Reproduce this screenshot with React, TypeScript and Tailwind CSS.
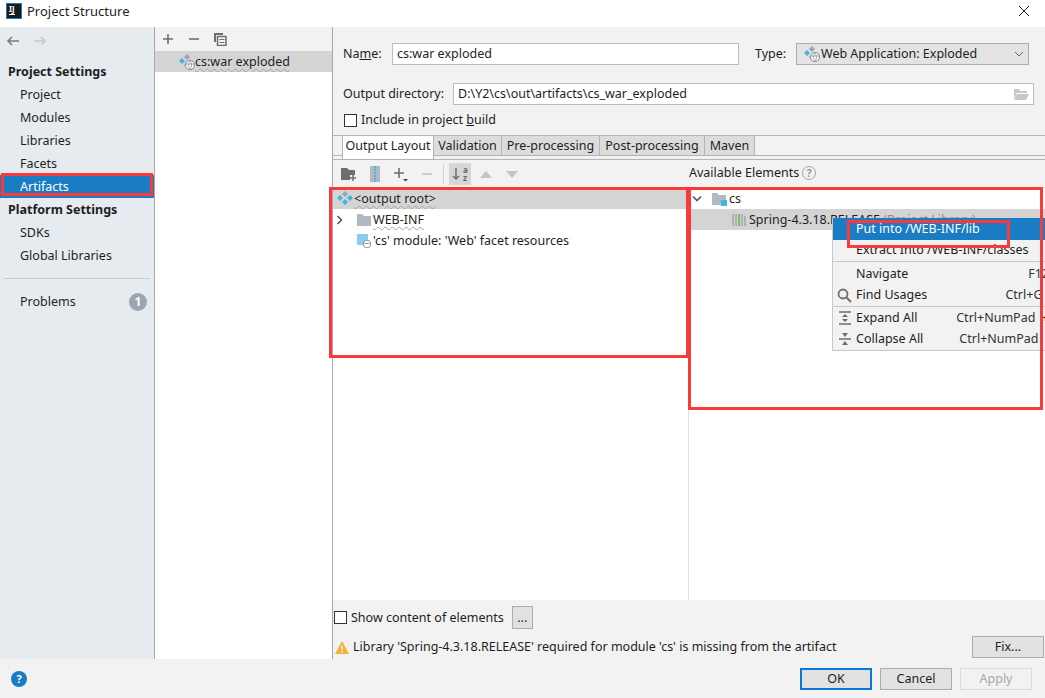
import React from 'react';

const ArtifactIcon = ({ globe = true }: { globe?: boolean }) => (
    <svg width="18" height="16" viewBox="0 0 18 16" className="shrink-0">
        <path d="M2 7l3-3 3 3-3 3z" fill="#40b6e0" />
        <path d="M7 3l3-3 3 3-3 3z" fill="#9aa7b0" />
        <path d="M7 11l3-3 3 3-3 3z" fill={globe ? '#9aa7b0' : '#40b6e0'} />
        {!globe && <path d="M12 7l3-3 3 3-3 3z" fill="#40b6e0" />}
        {globe && <circle cx="13" cy="11" r="4.5" fill="#fff" stroke="#8a969e" strokeWidth="1.2" />}
        {globe && <path d="M9 10h8M13 7c-2 2-2 6 0 8M13 7c2 2 2 6 0 8" stroke="#8a969e" strokeWidth="0.8" fill="none" />}
    </svg>
);

const Folder = ({ badge }: { badge?: boolean }) => (
    <svg width="16" height="14" viewBox="0 0 16 14" className="shrink-0">
        <path d="M1 1h5l2 2h7v10H1z" fill="#b0bac2" />
        {badge && <rect x="10" y="8" width="6" height="6" fill="#40b6e0" />}
    </svg>
);

const Wavy = ({ children }: { children: React.ReactNode }) => (
    <span className="underline decoration-wavy decoration-[#a3a3a3] decoration-1 underline-offset-2">{children}</span>
);

const NavItem = ({ label, active }: { label: string; active?: boolean }) => (
    <div className={`h-[23px] pl-5 flex items-center ${active ? 'bg-[#1a7cc3] text-white' : ''}`}>{label}</div>
);

const ToolIcon = ({ children, active }: { children: React.ReactNode; active?: boolean }) => (
    <div className={`w-[22px] h-[22px] flex items-center justify-center ${active ? 'bg-[#d6d6d6]' : ''}`}>{children}</div>
);

const Tab = ({ label, w, active }: { label: string; w: string; active?: boolean }) => (
    <div className={`${w} flex items-center justify-center border-r border-[#b4b4b4] ${active ? 'bg-white h-[23px] pb-[3px] border-l relative' : 'bg-[#dcdcdc] h-[19px]'}`}>{label}</div>
);

const Button = ({ label, w, primary, disabled }: { label: string; w: string; primary?: boolean; disabled?: boolean }) => (
    <div className={`${w} h-[22px] flex items-center justify-center bg-[#e1e1e1] border ${primary ? 'border-2 border-[#0a78d7]' : 'border-[#adadad]'} ${disabled ? 'bg-[#f2f2f2] border-[#d9d9d9] text-[#a8a8a8]' : ''}`}>{label}</div>
);

const Check = () => <div className="w-[13px] h-[13px] border border-[#333] bg-white shrink-0" />;

const MenuRow = ({ label, shortcut, icon, active }: { label: string; shortcut?: string; icon?: React.ReactNode; active?: boolean }) => (
    <div className={`h-[21.5px] pr-[15px] flex items-center justify-between whitespace-nowrap ${active ? 'bg-[#1a7cc3] text-white' : ''}`}>
        <div className="flex items-center">
            <div className="w-[23px] flex justify-center">{icon}</div>
            <span>{label}</span>
        </div>
        {shortcut && <span className="text-[#333] whitespace-pre">{shortcut}</span>}
    </div>
);

export default function App() {
    return (
        <div className="relative w-[1045px] h-[698px] overflow-hidden bg-[#f2f2f2] text-[12.5px] leading-[14px] text-[#1e1e1e] font-['Noto_Sans','Liberation_Sans',sans-serif]">
            {/* Title bar */}
            <div className="h-[27px] bg-white flex items-center pl-[6px] pr-[15px] pb-[5px]">
                <div className="w-[16px] h-[16px] bg-[#1a1a1a] border border-[#1a7cc3] text-white text-[8px] font-bold leading-[7px] pl-[2px] pt-[1px]">
                    IJ
                    <div className="w-[6px] h-px bg-white mt-[2px]" />
                </div>
                <span className="ml-[5px] text-[13px]">Project Structure</span>
                <svg width="12" height="12" viewBox="0 0 12 12" className="ml-auto">
                    <path d="M1 1l10 10M11 1L1 11" stroke="#222" strokeWidth="1" />
                </svg>
            </div>

            <div className="flex h-[632px]">
                {/* Sidebar */}
                <div className="w-[155px] shrink-0 bg-[#e6ebf0] border-r border-[#a8a8a8] flex flex-col">
                    <div className="h-[28px] flex items-center gap-[13px] pl-[6px]">
                        <svg width="14" height="12" viewBox="0 0 14 12"><path d="M13 6H2M6 2L2 6l4 4" stroke="#7a7a7a" strokeWidth="1.6" fill="none" /></svg>
                        <svg width="14" height="12" viewBox="0 0 14 12"><path d="M1 6h11M8 2l4 4-4 4" stroke="#c4c8cb" strokeWidth="1.6" fill="none" /></svg>
                    </div>
                    <div className="h-[22px] mt-[6px] pl-2 flex items-center font-bold">Project Settings</div>
                    <NavItem label="Project" />
                    <NavItem label="Modules" />
                    <NavItem label="Libraries" />
                    <NavItem label="Facets" />
                    <NavItem label="Artifacts" active />
                    <div className="h-[23px] pl-2 flex items-center font-bold">Platform Settings</div>
                    <NavItem label="SDKs" />
                    <NavItem label="Global Libraries" />
                    <div className="h-px bg-[#c9cccf] mx-1 mt-[11px] mb-[11px]" />
                    <div className="h-[23px] pl-5 pr-[7px] flex items-center justify-between">
                        <span>Problems</span>
                        <span className="w-[18px] h-[18px] rounded-full bg-[#9aa7b0] text-white font-bold text-[12px] flex items-center justify-center">1</span>
                    </div>
                </div>

                {/* Artifact list */}
                <div className="w-[178px] shrink-0 bg-white border-r border-[#a8a8a8]">
                    <div className="h-[24px] bg-[#f2f2f2] flex items-center pl-[2px] gap-[4px]">
                        <ToolIcon><svg width="12" height="12" viewBox="0 0 12 12"><path d="M6 1v10M1 6h10" stroke="#6e6e6e" strokeWidth="1.6" /></svg></ToolIcon>
                        <ToolIcon><svg width="12" height="12" viewBox="0 0 12 12"><path d="M1 6h10" stroke="#6e6e6e" strokeWidth="1.6" /></svg></ToolIcon>
                        <ToolIcon><svg width="14" height="14" viewBox="0 0 14 14"><path d="M1 1h9v2H3v7H1z" fill="#6e6e6e" /><path d="M4.5 4.5h8.5v9H4.5z" fill="none" stroke="#6e6e6e" strokeWidth="1.5" /><path d="M6.5 7.5h5M6.5 10.5h5" stroke="#6e6e6e" strokeWidth="1" /></svg></ToolIcon>
                    </div>
                    <div className="h-[21px] bg-[#d4d4d4] flex items-center pl-[22px]">
                        <ArtifactIcon />
                        <Wavy>cs:war exploded</Wavy>
                    </div>
                </div>

                {/* Detail panel */}
                <div className="flex-1 min-w-0 flex flex-col">
                    <div className="h-[16px]" />
                    <div className="h-[22px] flex items-center pl-[10px]">
                        <span className="w-[49px]">Na<span className="underline">m</span>e:</span>
                        <div className="w-[347px] h-[22px] bg-white border border-[#bdbdbd] flex items-center pl-[4px]">cs:war exploded</div>
                        <span className="ml-[16px] w-[41px]">Type:</span>
                        <div className="w-[233px] h-[22px] bg-[#e3e3e3] border border-[#adadad] flex items-center pl-[5px] gap-[1px]">
                            <ArtifactIcon />
                            <span>Web Application: Exploded</span>
                            <svg width="10" height="6" viewBox="0 0 10 6" className="ml-auto mr-[4px]"><path d="M1 1l4 4 4-4" stroke="#666" fill="none" /></svg>
                        </div>
                    </div>
                    <div className="h-[22px] mt-[18px] flex items-center pl-[10px]">
                        <span className="w-[110px]">Output directory:</span>
                        <div className="w-[581px] h-[22px] bg-white border border-[#bdbdbd] flex items-center pl-[4px] justify-between pr-[4px]">
                            <span>D:\Y2\cs\out\artifacts\cs_war_exploded</span>
                            <svg width="16" height="12" viewBox="0 0 16 12"><path d="M1 1h5l1 2h7v2H4L1 11z" fill="#c4c9cc" /><path d="M4 6h12l-3 6H1z" fill="#c4c9cc" /></svg>
                        </div>
                    </div>
                    <div className="h-[14px] mt-[8px] flex items-center pl-[11px] gap-[4px]">
                        <Check />
                        <span>Include in project <span className="underline">b</span>uild</span>
                    </div>

                    {/* Tabs */}
                    <div className="mt-[8px] border-t border-[#b4b4b4]">
                        <div className="h-[20px] pl-[9px] flex items-start border-b border-[#b4b4b4]">
                            <Tab label="Output Layout" w="w-[92px]" active />
                            <Tab label="Validation" w="w-[68px]" />
                            <Tab label="Pre-processing" w="w-[98px]" />
                            <Tab label="Post-processing" w="w-[105px]" />
                            <Tab label="Maven" w="w-[50px]" />
                        </div>
                    </div>
                    <div className="h-[3px]" />
                    <div className="h-px bg-[#b4b4b4]" />

                    {/* Layout + available elements */}
                    <div className="flex h-[28px]">
                        <div className="w-[356px] flex items-center pl-[5px] gap-[4px]">
                            <ToolIcon><svg width="16" height="14" viewBox="0 0 16 14"><path d="M0 1h6l2 2h6v5H9v5H0z" fill="#6e6e6e" /><path d="M12 8v6M9 11h6" stroke="#6e6e6e" strokeWidth="1.5" /></svg></ToolIcon>
                            <ToolIcon><svg width="12" height="16" viewBox="0 0 12 16"><rect x="1" y="0" width="10" height="16" fill="#b0bac2" /><path d="M6 0v16" stroke="#40b6e0" strokeWidth="2" strokeDasharray="2 1" /></svg></ToolIcon>
                            <ToolIcon><svg width="16" height="16" viewBox="0 0 16 16"><path d="M6 2v10M1 7h10" stroke="#6e6e6e" strokeWidth="1.6" /><path d="M10 13h5l-2.5 2.5z" fill="#444" /></svg></ToolIcon>
                            <ToolIcon><svg width="12" height="12" viewBox="0 0 12 12"><path d="M1 6h10" stroke="#c4c4c4" strokeWidth="1.6" /></svg></ToolIcon>
                            <div className="w-px h-[20px] bg-[#d0d0d0] mx-[1px]" />
                            <ToolIcon active>
                                <svg width="12" height="16" viewBox="0 0 12 16"><path d="M5 2v11M2 10l3 3 3-3" stroke="#6e6e6e" strokeWidth="1.5" fill="none" /></svg>
                                <span className="text-[8px] leading-[8px] font-bold text-[#666] w-[6px]">a z</span>
                            </ToolIcon>
                            <ToolIcon><svg width="12" height="7" viewBox="0 0 12 7"><path d="M6 0l6 7H0z" fill="#c4c4c4" /></svg></ToolIcon>
                            <ToolIcon><svg width="12" height="7" viewBox="0 0 12 7"><path d="M0 0h12L6 7z" fill="#c4c4c4" /></svg></ToolIcon>
                        </div>
                        <div className="flex-1 flex items-center pb-[2px] gap-[3px]">
                            <span>Available Elements</span>
                            <span className="w-[14px] h-[14px] rounded-full border border-[#9aa7b0] text-[#8a969e] text-[10px] font-bold flex items-center justify-center">?</span>
                        </div>
                    </div>
                    <div className="flex h-[412px] bg-white">
                        <div className="w-[356px] border-r border-[#e2e2e2]">
                            <div className="h-[21px] bg-[#d4d4d4] flex items-center pl-[2px] gap-[1px]">
                                <ArtifactIcon globe={false} />
                                <Wavy>&lt;output root&gt;</Wavy>
                            </div>
                            <div className="h-[21px] flex items-center pl-[3px]">
                                <svg width="8" height="10" viewBox="0 0 8 10"><path d="M1.5 1l4 4-4 4" stroke="#555" strokeWidth="1.6" fill="none" /></svg>
                                <div className="ml-[12px] mr-[1px]"><Folder /></div>
                                <Wavy>WEB-INF</Wavy>
                            </div>
                            <div className="h-[21px] flex items-center pl-[24px] gap-[2px]">
                                <svg width="14" height="15" viewBox="0 0 14 15" className="shrink-0">
                                    <rect x="0" y="1" width="11" height="11" fill="#87cfec" />
                                    <circle cx="10" cy="11" r="3.8" fill="#fff" stroke="#8a969e" />
                                    <path d="M6.5 10.5h7" stroke="#8a969e" strokeWidth="0.8" />
                                </svg>
                                <span>'cs' module: 'Web' facet resources</span>
                            </div>
                        </div>
                        <div className="flex-1">
                            <div className="h-[21px] flex items-center pl-[3px]">
                                <svg width="10" height="8" viewBox="0 0 10 8"><path d="M1 1.5l4 4 4-4" stroke="#555" strokeWidth="1.6" fill="none" /></svg>
                                <div className="ml-[9px] mr-[2px]"><Folder badge /></div>
                                <span>cs</span>
                            </div>
                            <div className="h-[21px] bg-[#d4d4d4] flex items-center pl-[43px] gap-[2px] whitespace-nowrap">
                                <svg width="15" height="12" viewBox="0 0 15 12" className="shrink-0"><path d="M1 0v12M4 0v12" stroke="#9aa7b0" strokeWidth="1.5" /><path d="M7 0v12" stroke="#62b543" strokeWidth="1.5" /><path d="M10 0v12M13 2v10" stroke="#9aa7b0" strokeWidth="1.5" /></svg>
                                <span>Spring-4.3.18.RELEASE <span className="text-[#8c8c8c]">(Project Library)</span></span>
                            </div>
                        </div>
                    </div>

                    {/* Bottom options */}
                    <div className="h-[35px] pl-[1px] flex items-center">
                        <Check />
                        <span className="ml-[4px]">Show content of elements</span>
                        <div className="ml-[8px] w-[21px] h-[23px] bg-[#e1e1e1] border border-[#adadad] flex items-center justify-center">...</div>
                    </div>
                    <div className="flex items-center h-[24px] pl-[2px] pr-px">
                        <svg width="14" height="13" viewBox="0 0 14 13" className="shrink-0"><path d="M7 0l7 13H0z" fill="#f2b03c" /><path d="M7 4.5v4.5M7 10v1.5" stroke="#fff" strokeWidth="1.4" /></svg>
                        <span className="ml-[4px]">Library 'Spring-4.3.18.RELEASE' required for module 'cs' is missing from the artifact</span>
                        <div className="ml-auto"><Button label="Fix..." w="w-[72px]" /></div>
                    </div>
                </div>
            </div>

            {/* Footer */}
            <div className="h-[39px] flex items-center pl-[11px] pr-[13px]">
                <div className="w-[16px] h-[16px] rounded-full bg-[#1a7cc3] text-white text-[11px] font-bold flex items-center justify-center">?</div>
                <div className="ml-auto flex gap-2">
                    <Button label="OK" w="w-[72px]" primary />
                    <Button label="Cancel" w="w-[72px]" />
                    <Button label="Apply" w="w-[72px]" disabled />
                </div>
            </div>

            {/* Context menu */}
            <div className="absolute left-[832px] top-[218px] w-[232px] bg-[#f2f2f2] border-b border-l border-[#c8c8c8]">
                <MenuRow label="Put into /WEB-INF/lib" active />
                <MenuRow label="Extract Into /WEB-INF/classes" />
                <div className="h-px bg-[#c8c8c8] mb-[1px]" />
                <MenuRow label="Navigate" shortcut="F12" />
                <MenuRow label="Find Usages" shortcut="Ctrl+G  " icon={<svg width="15" height="15" viewBox="0 0 15 15"><circle cx="6" cy="6" r="4.5" fill="none" stroke="#6e6e6e" strokeWidth="1.8" /><path d="M9.5 9.5l4.5 4.5" stroke="#6e6e6e" strokeWidth="2" /></svg>} />
                <div className="h-px bg-[#c8c8c8]" />
                <MenuRow label="Expand All" shortcut="Ctrl+NumPad  +" icon={<svg width="14" height="14" viewBox="0 0 14 14"><path d="M1 1h12M1 13h12" stroke="#6e6e6e" strokeWidth="1.5" /><path d="M7 3l3 3H4zM7 11l3-3H4z" fill="#6e6e6e" /></svg>} />
                <MenuRow label="Collapse All" shortcut="Ctrl+NumPad  -" icon={<svg width="14" height="14" viewBox="0 0 14 14"><path d="M1 7h12" stroke="#6e6e6e" strokeWidth="1.5" /><path d="M7 5L4 1h6zM7 9l3 4H4z" fill="#6e6e6e" /></svg>} />
            </div>

            {/* Red annotation boxes */}
            <div className="absolute left-[1px] top-[173px] w-[152px] h-[23px] border-[3px] border-[#f93a3a]" />
            <div className="absolute left-[329px] top-[187px] w-[360px] h-[171px] border-[3px] border-[#f93a3a]" />
            <div className="absolute left-[688px] top-[187px] w-[355px] h-[223px] border-[3px] border-[#f93a3a]" />
            <div className="absolute left-[847px] top-[220px] w-[163px] h-[28px] border-[3px] border-[#f93a3a]" />
        </div>
    );
}
